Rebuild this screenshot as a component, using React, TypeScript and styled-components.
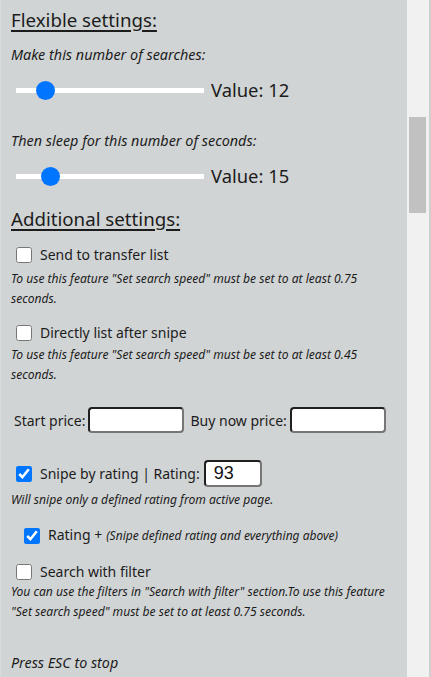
import React from "react";
import styled, { createGlobalStyle } from "styled-components";

const Global = createGlobalStyle`
  html, body { margin: 0; padding: 0; background: #d1d4d5; }
  body { font-family: "Noto Sans", "Open Sans", sans-serif; color: #1c1c1c; }
  * { box-sizing: border-box; }
`;

const Page = styled.div`
  display: flex;
  width: 431px;
  height: 677px;
  overflow: hidden;
`;

const Panel = styled.div`
  width: 407px;
  flex: none;
  height: 677px;
  background: #d1d4d5;
  border-left: 1px solid #dadcdd;
  padding: 0 0 0 10px;
  display: flex;
  flex-direction: column;
`;

const Track = styled.div`
  width: 22px;
  flex: none;
  background: #f1f1f1;
  padding: 117px 0 0 2px;
`;

const Thumb = styled.div`
  width: 17px;
  height: 96px;
  background: #c1c1c1;
`;

const Edge = styled.div`
  width: 2px;
  flex: none;
  background: #cfcfcf;
`;

const Heading = styled.div<{ $mt: number }>`
  margin-top: ${(p) => p.$mt}px;
  font-size: 18.7px;
  line-height: 28px;
  text-decoration: underline;
  text-underline-offset: 3px;
  text-decoration-thickness: 2px;
`;

const FieldLabel = styled.div<{ $mt: number }>`
  margin-top: ${(p) => p.$mt}px;
  font-size: 14.4px;
  line-height: 20px;
  font-style: italic;
`;

const SliderRow = styled.div<{ $mt: number }>`
  margin-top: ${(p) => p.$mt}px;
  height: 24px;
  display: flex;
  align-items: center;
  gap: 7px;
  padding-left: 5px;
`;

const Range = styled.input.attrs({ type: "range" })`
  -webkit-appearance: none;
  appearance: none;
  width: 188px;
  height: 24px;
  margin: 0;
  background: transparent;
  &::-webkit-slider-runnable-track {
    height: 5px;
    background: #ffffff;
    border: none;
  }
  &::-webkit-slider-thumb {
    -webkit-appearance: none;
    width: 19px;
    height: 19px;
    border-radius: 50%;
    background: #0075ff;
    margin-top: -7px;
    border: none;
  }
`;

const ValueText = styled.span`
  font-size: 18.4px;
  line-height: 24px;
`;

const CheckRow = styled.label<{ $mt: number; $indent?: number }>`
  margin-top: ${(p) => p.$mt}px;
  padding-left: ${(p) => p.$indent ?? 5}px;
  min-height: 20px;
  display: flex;
  align-items: center;
  gap: 8px;
  font-size: 14px;
  line-height: 20px;
`;

const Box = styled.input.attrs({ type: "checkbox" })`
  width: 16px;
  height: 16px;
  margin: 0;
  accent-color: #0075ff;
  flex: none;
`;

const Note = styled.div<{ $mt: number }>`
  margin-top: ${(p) => p.$mt}px;
  font-size: 12.1px;
  line-height: 20px;
  font-style: italic;
  padding-right: 8px;
`;

const Aside = styled.span`
  font-size: 12px;
  font-style: italic;
  margin-left: 4px;
`;

const PriceRow = styled.div<{ $mt: number }>`
  margin-top: ${(p) => p.$mt}px;
  display: flex;
  align-items: center;
  gap: 3px;
  font-size: 14px;
  padding-left: 3px;
`;

const TextBox = styled.input<{ $w: number }>`
  width: ${(p) => p.$w}px;
  height: 26px;
  border-radius: 4px;
  border-style: solid;
  border-width: 2px;
  border-color: #202020 #767676 #767676 #202020;
  background: #fff;
  font-family: "Liberation Sans", Arial, sans-serif;
  font-size: 18px;
  padding: 0 8px;
  color: #111;
  margin: 0 3px 0 0;
  outline: none;
`;

const RatingBox = styled(TextBox)`
  margin-left: -4px;
  height: 27px;
`;

const Stop = styled.div<{ $mt: number }>`
  margin-top: ${(p) => p.$mt}px;
  font-size: 14.3px;
  line-height: 20px;
  font-style: italic;
`;

export default function App() {
  return (
    <>
      <Global />
      <Page>
        <Panel>
          <Heading $mt={6}>Flexible settings:</Heading>
          <FieldLabel $mt={11}>Make this number of searches:</FieldLabel>
          <SliderRow $mt={13}>
            <Range min={0} max={100} defaultValue={12} />
            <ValueText>Value: 12</ValueText>
          </SliderRow>
          <FieldLabel $mt={29}>Then sleep for this number of seconds:</FieldLabel>
          <SliderRow $mt={13}>
            <Range min={0} max={100} defaultValue={15} />
            <ValueText>Value: 15</ValueText>
          </SliderRow>
          <Heading $mt={17}>Additional settings:</Heading>
          <CheckRow $mt={12}>
            <Box />
            Send to transfer list
          </CheckRow>
          <Note $mt={4}>
            To use this feature "Set search speed" must be set to at least 0.75 seconds.
          </Note>
          <CheckRow $mt={14}>
            <Box />
            Directly list after snipe
          </CheckRow>
          <Note $mt={2}>
            To use this feature "Set search speed" must be set to at least 0.45 seconds.
          </Note>
          <PriceRow $mt={22}>
            Start price:
            <TextBox $w={96} />
            Buy now price:
            <TextBox $w={96} />
          </PriceRow>
          <CheckRow $mt={27}>
            <Box defaultChecked />
            Snipe by rating | Rating:
            <RatingBox $w={58} defaultValue="93" />
          </CheckRow>
          <Note $mt={3}>Will snipe only a defined rating from active page.</Note>
          <CheckRow $mt={15} $indent={13}>
            <Box defaultChecked />
            <span>
              Rating +<Aside>(Snipe defined rating and everything above)</Aside>
            </span>
          </CheckRow>
          <CheckRow $mt={16}>
            <Box />
            Search with filter
          </CheckRow>
          <Note $mt={0}>
            You can use the filters in "Search with filter" section.To use this feature "Set search speed" must be set to at least 0.75 seconds.
          </Note>
          <Stop $mt={31}>Press ESC to stop</Stop>
        </Panel>
        <Track>
          <Thumb />
        </Track>
        <Edge />
      </Page>
    </>
  );
}
